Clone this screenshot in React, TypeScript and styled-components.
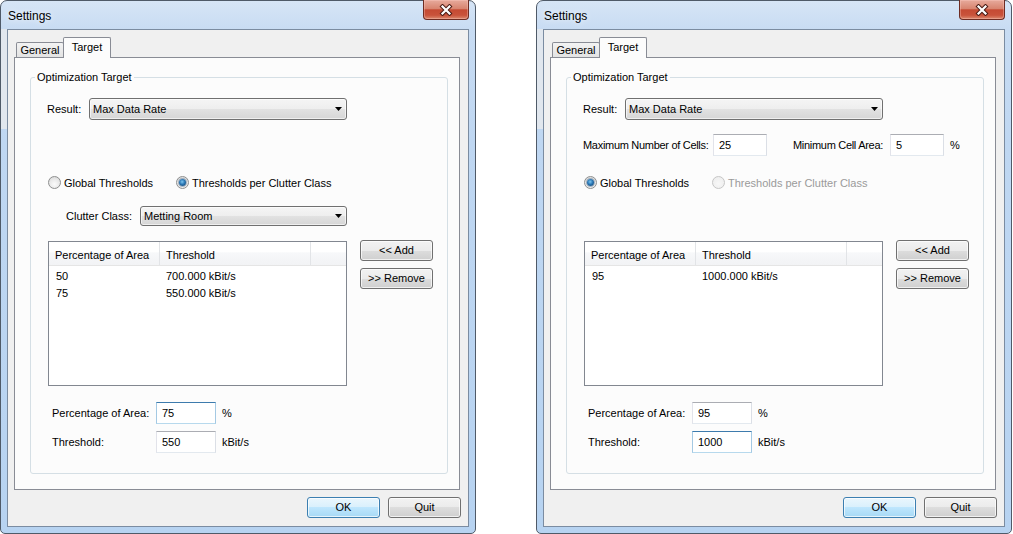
import React from 'react';
import styled, { createGlobalStyle } from 'styled-components';

const GlobalStyle = createGlobalStyle`
  html, body {
    margin: 0;
    padding: 0;
    background: #ffffff;
  }
  body {
    font-family: 'Liberation Sans', Arial, sans-serif;
    font-size: 11px;
    color: #000000;
  }
  *, *::before, *::after {
    box-sizing: border-box;
  }
`;

const Desktop = styled.div`
  display: flex;
  gap: 60px;
  width: 1013px;
  height: 534px;
  overflow: hidden;
`;

const WindowFrame = styled.div`
  width: 476px;
  height: 534px;
  flex-shrink: 0;
  display: flex;
  flex-direction: column;
  border: 1px solid #4f5a68;
  border-radius: 7px 7px 5px 5px;
  background:
    linear-gradient(#e1e7ee, #e1e7ee) 0 28px / 6px 100px no-repeat,
    linear-gradient(180deg, #d6e5f6 0px, #c8dcf3 28px, #bfd7f2 140px, #b7d3f1 100%);
`;

const TitleBar = styled.div`
  height: 28px;
  flex-shrink: 0;
  display: flex;
  align-items: center;
  padding-left: 7px;
`;

const TitleText = styled.span`
  font-size: 12px;
  margin-top: 1px;
  text-shadow: 0 0 6px rgba(255, 255, 255, 0.95);
`;

const CloseButton = styled.div`
  align-self: flex-start;
  margin: -1px 6px 0 auto;
  width: 46px;
  height: 20px;
  display: flex;
  align-items: center;
  justify-content: center;
  border: 1px solid #6e2c22;
  border-top: none;
  border-radius: 0 0 4px 4px;
  background: linear-gradient(180deg, #e7aa9c 0%, #d88570 45%, #c54a33 52%, #c9533b 80%, #dc8a6f 100%);
  box-shadow: inset 0 0 0 1px rgba(255, 210, 200, 0.35);
`;

const Client = styled.div`
  flex: 1;
  margin: 0 6px 6px;
  border: 1px solid #7b8ca1;
  background: #f0f0f0;
  padding: 7px 0 0 6px;
  display: flex;
  flex-direction: column;
`;

const TabStrip = styled.div`
  display: flex;
  align-items: flex-end;
  height: 20px;
  padding-left: 2px;
`;

const Tab = styled.div<{ $active?: boolean }>`
  position: relative;
  z-index: ${({ $active }) => ($active ? 1 : 0)};
  width: 48px;
  height: ${({ $active }) => ($active ? 21 : 15)}px;
  margin-left: ${({ $active }) => ($active ? -1 : 0)}px;
  margin-bottom: ${({ $active }) => ($active ? -1 : 0)}px;
  display: flex;
  align-items: center;
  justify-content: center;
  padding-bottom: ${({ $active }) => ($active ? 2 : 0)}px;
  border: 1px solid #898c95;
  border-bottom: none;
  border-radius: 2px 2px 0 0;
  background: ${({ $active }) => ($active ? '#fcfcfc' : 'linear-gradient(#f3f3f3, #e3e3e3)')};
`;

const TabPanel = styled.div`
  width: 446px;
  height: 433px;
  border: 1px solid #898c95;
  background: #fcfcfc;
  padding: 12px 0 0 15px;
`;

const GroupBox = styled.fieldset`
  width: 418px;
  height: 404px;
  margin: 0;
  padding: 0;
  min-inline-size: 0;
  border: 1px solid #d5dfe5;
  border-radius: 3px;
`;

const GroupTitle = styled.legend`
  margin-left: 4px;
  padding: 0 2px;
  line-height: 14px;
`;

const GroupContent = styled.div`
  display: flex;
  flex-direction: column;
  padding-left: 17px;
`;

const Row = styled.div<{ $top: number; $height: number }>`
  display: flex;
  align-items: center;
  margin-top: ${({ $top }) => $top}px;
  height: ${({ $height }) => $height}px;
`;

const Label = styled.span<{ $left: number; $width: number; $condensed?: boolean }>`
  margin-left: ${({ $left }) => $left}px;
  width: ${({ $width }) => $width}px;
  flex-shrink: 0;
  white-space: nowrap;
  letter-spacing: ${({ $condensed }) => ($condensed ? '-0.3px' : 'normal')};
`;

const Combo = styled.div<{ $width: number; $height: number }>`
  width: ${({ $width }) => $width}px;
  height: ${({ $height }) => $height}px;
  display: flex;
  align-items: center;
  padding: 0 4px 1px 3px;
  border: 1px solid #707070;
  border-radius: 3px;
  background: linear-gradient(#f5f5f5 0%, #eeeeee 50%, #e2e2e2 50%, #d6d6d6 100%);
  box-shadow: inset 0 0 0 1px rgba(255, 255, 255, 0.6);
`;

const ComboText = styled.span`
  flex: 1;
  white-space: nowrap;
`;

const RadioItem = styled.label<{ $width?: number; $disabled?: boolean }>`
  display: flex;
  align-items: center;
  gap: 3px;
  width: ${({ $width }) => ($width ? `${$width}px` : 'auto')};
  color: ${({ $disabled }) => ($disabled ? '#9a9a9a' : '#000')};
  white-space: nowrap;
`;

const RadioCircle = styled.span<{ $checked?: boolean; $disabled?: boolean }>`
  width: 13px;
  height: 13px;
  flex-shrink: 0;
  border-radius: 50%;
  display: flex;
  align-items: center;
  justify-content: center;
  border: 1px solid ${({ $disabled }) => ($disabled ? '#c6c6c6' : '#8e8f8f')};
  background: ${({ $disabled }) =>
    $disabled
      ? 'radial-gradient(circle at 50% 60%, #f7f7f7 0%, #ececec 100%)'
      : 'radial-gradient(circle at 50% 65%, #fbfbfb 0%, #e8e8e8 55%, #d2d2d2 100%)'};

  &::after {
    content: '';
    display: ${({ $checked }) => ($checked ? 'block' : 'none')};
    width: 7px;
    height: 7px;
    border-radius: 50%;
    background: radial-gradient(circle at 45% 40%, #7cc6f0 0%, #2b77b5 45%, #0f3a63 100%);
    box-shadow: 0 0 0 1px rgba(30, 70, 110, 0.35);
  }
`;

const ListArea = styled.div<{ $top: number }>`
  margin-top: ${({ $top }) => $top}px;
  display: flex;
  align-items: flex-start;
  gap: 13px;
`;

const ListView = styled.div`
  width: 299px;
  height: 145px;
  border: 1px solid #828790;
  background: #ffffff;
`;

const ListHeader = styled.div`
  display: flex;
  height: 24px;
  border-bottom: 1px solid #e5e5e5;
  background: linear-gradient(#ffffff 0%, #ffffff 45%, #f7f8fa 46%, #f2f3f5 100%);
`;

const HeaderCell = styled.div<{ $width?: number }>`
  ${({ $width }) => ($width ? `width: ${$width}px;` : 'flex: 1;')}
  display: flex;
  align-items: center;
  padding: 2px 0 0 6px;
  border-right: ${({ $width }) => ($width ? '1px solid #e2e4e7' : 'none')};
  white-space: nowrap;
`;

const ListBody = styled.div`
  padding-top: 1px;
`;

const ListItem = styled.div`
  display: flex;
  align-items: center;
  height: 17px;
`;

const ItemCell = styled.div<{ $width: number; $pad: number }>`
  width: ${({ $width }) => $width}px;
  padding-left: ${({ $pad }) => $pad}px;
  white-space: nowrap;
`;

const SideButtons = styled.div`
  display: flex;
  flex-direction: column;
  gap: 7px;
  margin-top: -1px;
`;

const PushButton = styled.button<{ $default?: boolean }>`
  appearance: none;
  width: 73px;
  height: 21px;
  margin: 0;
  padding: 0 0 1px;
  font: inherit;
  color: #000;
  border: 1px solid ${({ $default }) => ($default ? '#3c7fb1' : '#707070')};
  border-radius: 3px;
  background: ${({ $default }) =>
    $default
      ? 'linear-gradient(#eaf6fd 0%, #d9f0fc 50%, #bee6fd 50%, #a7d9f5 100%)'
      : 'linear-gradient(#f2f2f2 0%, #ebebeb 50%, #dddddd 50%, #cfcfcf 100%)'};
  box-shadow: inset 0 0 0 1px rgba(255, 255, 255, 0.7);
`;

const TextBox = styled.input<{ $width: number; $focused?: boolean }>`
  width: ${({ $width }) => $width}px;
  height: 22px;
  margin: 0;
  padding: 0 0 1px 5px;
  font: inherit;
  color: #000;
  background: #fff;
  outline: none;
  border: 1px solid;
  border-color: ${({ $focused }) =>
    $focused ? '#3d7bad #a4c9e3 #b7d9ed #a4c9e3' : '#abadb3 #dbdfe6 #e3e9ef #e2e3ea'};
`;

const Unit = styled.span`
  margin-left: 6px;
`;

const ButtonBar = styled.div`
  width: 447px;
  margin-top: 7px;
  display: flex;
  justify-content: flex-end;
  gap: 8px;
`;

type DialogData = {
  cells?: { max: string; min: string };
  globalChecked: boolean;
  perClutterDisabled?: boolean;
  clutter?: string;
  rows: [string, string][];
  pct: string;
  threshold: string;
  focus: 'pct' | 'threshold';
};

const dialogs: DialogData[] = [
  {
    globalChecked: false,
    clutter: 'Metting Room',
    rows: [
      ['50', '700.000 kBit/s'],
      ['75', '550.000 kBit/s'],
    ],
    pct: '75',
    threshold: '550',
    focus: 'pct',
  },
  {
    cells: { max: '25', min: '5' },
    globalChecked: true,
    perClutterDisabled: true,
    rows: [['95', '1000.000 kBit/s']],
    pct: '95',
    threshold: '1000',
    focus: 'threshold',
  },
];

const CloseGlyph = () => (
  <svg width="14" height="12" viewBox="0 0 14 12">
    <path d="M3.5 2.5 L10.5 9.5 M10.5 2.5 L3.5 9.5" stroke="#4a1c15" strokeWidth="4.2" strokeLinecap="square" />
    <path d="M3.5 2.5 L10.5 9.5 M10.5 2.5 L3.5 9.5" stroke="#ffffff" strokeWidth="2.2" strokeLinecap="square" />
  </svg>
);

const ComboArrow = () => (
  <svg width="7" height="4" viewBox="0 0 7 4">
    <path d="M0 0 H7 L3.5 4 Z" fill="#000" />
  </svg>
);

const SettingsDialog = ({ data }: { data: DialogData }) => (
  <WindowFrame>
    <TitleBar>
      <TitleText>Settings</TitleText>
      <CloseButton>
        <CloseGlyph />
      </CloseButton>
    </TitleBar>
    <Client>
      <TabStrip>
        <Tab>General</Tab>
        <Tab $active>Target</Tab>
      </TabStrip>
      <TabPanel>
        <GroupBox>
          <GroupTitle>Optimization Target</GroupTitle>
          <GroupContent>
            <Row $top={14} $height={22}>
              <Label $left={-1} $width={42}>Result:</Label>
              <Combo $width={258} $height={22}>
                <ComboText>Max Data Rate</ComboText>
                <ComboArrow />
              </Combo>
            </Row>

            <Row $top={14} $height={22}>
              {data.cells && (
                <>
                  <Label $left={-1} $width={130} $condensed>Maximum Number of Cells:</Label>
                  <TextBox $width={54} readOnly value={data.cells.max} />
                  <Label $left={26} $width={97} $condensed>Minimum Cell Area:</Label>
                  <TextBox $width={54} readOnly value={data.cells.min} />
                  <Unit>%</Unit>
                </>
              )}
            </Row>

            <Row $top={19} $height={15}>
              <RadioItem $width={128}>
                <RadioCircle $checked={data.globalChecked} />
                Global Thresholds
              </RadioItem>
              <RadioItem $disabled={data.perClutterDisabled}>
                <RadioCircle $checked={!data.globalChecked} $disabled={data.perClutterDisabled} />
                Thresholds per Clutter Class
              </RadioItem>
            </Row>

            <Row $top={16} $height={20}>
              {data.clutter && (
                <>
                  <Label $left={18} $width={74}>Clutter Class:</Label>
                  <Combo $width={207} $height={20}>
                    <ComboText>{data.clutter}</ComboText>
                    <ComboArrow />
                  </Combo>
                </>
              )}
            </Row>

            <ListArea $top={15}>
              <ListView>
                <ListHeader>
                  <HeaderCell $width={111}>Percentage of Area</HeaderCell>
                  <HeaderCell $width={151}>Threshold</HeaderCell>
                  <HeaderCell />
                </ListHeader>
                <ListBody>
                  {data.rows.map(([pct, thr]) => (
                    <ListItem key={pct}>
                      <ItemCell $width={111} $pad={7}>{pct}</ItemCell>
                      <ItemCell $width={151} $pad={6}>{thr}</ItemCell>
                    </ListItem>
                  ))}
                </ListBody>
              </ListView>
              <SideButtons>
                <PushButton>&lt;&lt; Add</PushButton>
                <PushButton>&gt;&gt; Remove</PushButton>
              </SideButtons>
            </ListArea>

            <Row $top={16} $height={22}>
              <Label $left={4} $width={104}>Percentage of Area:</Label>
              <TextBox $width={60} readOnly value={data.pct} $focused={data.focus === 'pct'} />
              <Unit>%</Unit>
            </Row>
            <Row $top={7} $height={22}>
              <Label $left={4} $width={104}>Threshold:</Label>
              <TextBox $width={60} readOnly value={data.threshold} $focused={data.focus === 'threshold'} />
              <Unit>kBit/s</Unit>
            </Row>
          </GroupContent>
        </GroupBox>
      </TabPanel>
      <ButtonBar>
        <PushButton $default>OK</PushButton>
        <PushButton>Quit</PushButton>
      </ButtonBar>
    </Client>
  </WindowFrame>
);

const App = () => (
  <>
    <GlobalStyle />
    <Desktop>
      {dialogs.map((d, i) => (
        <SettingsDialog key={i} data={d} />
      ))}
    </Desktop>
  </>
);

export default App;
